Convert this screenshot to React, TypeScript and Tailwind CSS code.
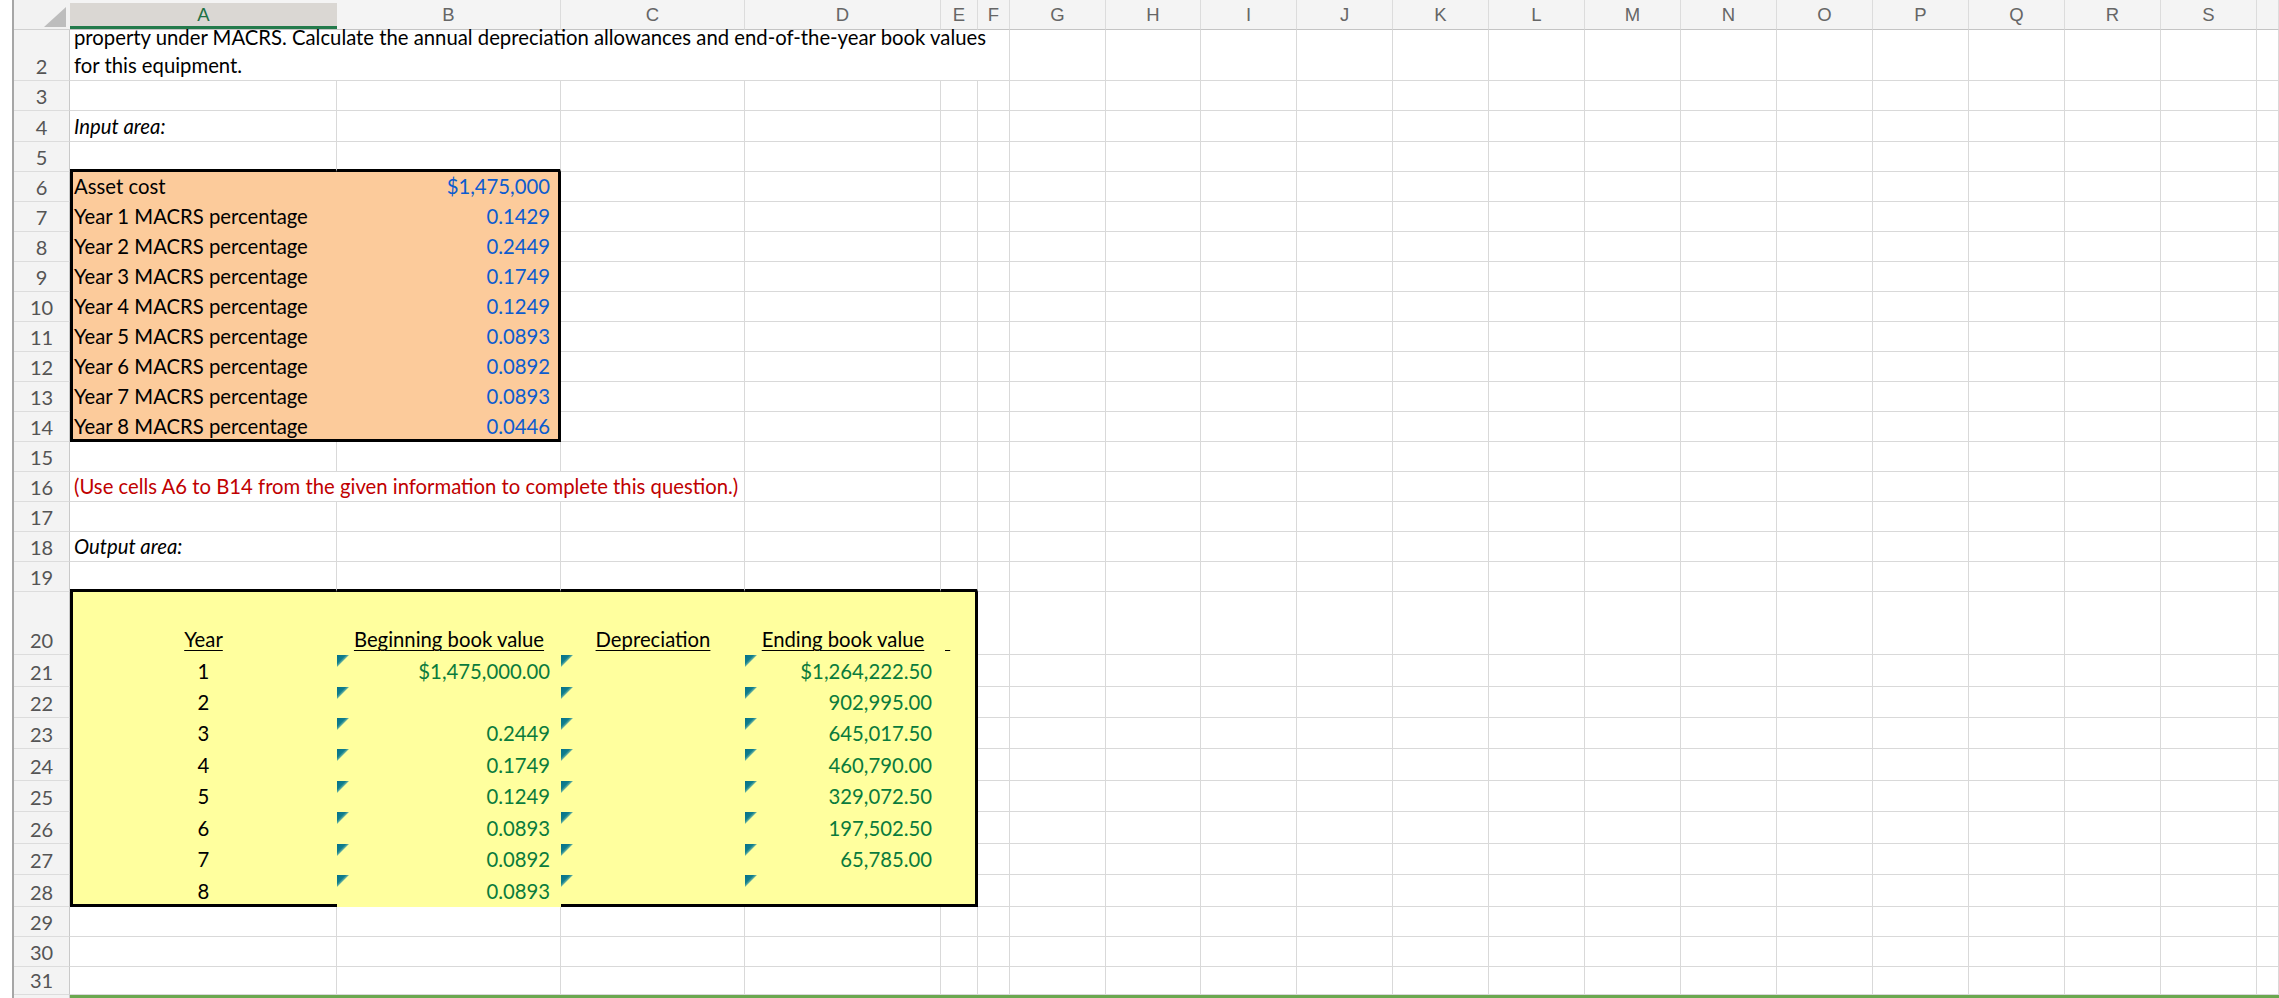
import React from "react";

const COLS =
  "grid grid-cols-[56px_267px_224px_184px_196px_37px_32px_96px_95px_repeat(11,96px)_1fr]";
const LETTERS = ["A", "B", "C", "D", "E", "F", "G", "H", "I", "J", "K", "L", "M", "N", "O", "P", "Q", "R", "S", ""];
const GRID = "border-r border-b border-[#d9d9d9]";
const TXT = "flex items-end whitespace-nowrap px-[4px] leading-[24px]";
const THICK_BOTTOM = "border-r border-r-[#d9d9d9] border-b-[3px] border-b-black";

const INPUT = [
  ["Asset cost", "$1,475,000"],
  ["Year 1 MACRS percentage", "0.1429"],
  ["Year 2 MACRS percentage", "0.2449"],
  ["Year 3 MACRS percentage", "0.1749"],
  ["Year 4 MACRS percentage", "0.1249"],
  ["Year 5 MACRS percentage", "0.0893"],
  ["Year 6 MACRS percentage", "0.0892"],
  ["Year 7 MACRS percentage", "0.0893"],
  ["Year 8 MACRS percentage", "0.0446"],
];

const OUT = [
  { y: 1, beg: "$1,475,000.00", end: "$1,264,222.50", h: "h-[32px]" },
  { y: 2, beg: "", end: "902,995.00", h: "h-[31px]" },
  { y: 3, beg: "0.2449", end: "645,017.50", h: "h-[31px]" },
  { y: 4, beg: "0.1749", end: "460,790.00", h: "h-[32px]" },
  { y: 5, beg: "0.1249", end: "329,072.50", h: "h-[31px]" },
  { y: 6, beg: "0.0893", end: "197,502.50", h: "h-[32px]" },
  { y: 7, beg: "0.0892", end: "65,785.00", h: "h-[31px]" },
  { y: 8, beg: "0.0893", end: "", h: "h-[32px]" },
];

function RowNum({ n }: { n?: number }) {
  return (
    <div className="flex items-end justify-center bg-[#f3f3f3] border-r border-r-[#c9c9c9] border-b border-b-[#dcdcdc] pb-[4px] text-[20px] leading-[20px] text-[#555]">
      {n}
    </div>
  );
}

function blanks(from: number, special?: (i: number) => string | undefined) {
  const out = [];
  for (let i = from; i < 20; i++) out.push(<div key={i} className={special?.(i) ?? GRID} />);
  return out;
}

// excel "number stored as text" style corner flag
function Flag() {
  return (
    <svg className="absolute left-0 top-0" width="12" height="12" viewBox="0 0 12 12">
      <defs>
        <linearGradient id="flag" x1="0" y1="0" x2="1" y2="1">
          <stop offset="0" stopColor="#04708a" />
          <stop offset="0.36" stopColor="#107e8d" />
          <stop offset="0.5" stopColor="#74b8a2" />
        </linearGradient>
      </defs>
      <polygon points="0,0 12,0 0,12" fill="url(#flag)" />
    </svg>
  );
}

function Row({ h, n, children }: { h: string; n?: number; children: React.ReactNode }) {
  return (
    <div className={`${COLS} ${h}`}>
      <RowNum n={n} />
      {children}
    </div>
  );
}

export default function App() {
  return (
    <div className="w-[2279px] h-[998px] overflow-hidden bg-white pl-[12px] [font-family:Lato,'Open_Sans',sans-serif] text-[20.3px] text-black">
      <div className="h-full border-l-2 border-[#a6a6a6]">
        {/* column headers */}
        <div className={`${COLS} h-[30px]`}>
          <div className="relative bg-[#f2f2f2] border-b border-[#d0d0d0]">
            <svg className="absolute left-[30px] top-[7px]" width="22" height="20" viewBox="0 0 22 20">
              <polygon points="22,0 22,20 0,20" fill="#bdbdbd" />
            </svg>
          </div>
          {LETTERS.map((l, i) =>
            i === 0 ? (
              <div key={i} className="bg-[#f4f4f4] pt-[3px] border-b border-[#c4c4c4]">
                <div className="h-full flex items-center justify-center bg-[#dad7d3] border-b-[3px] border-[#237a4b] text-[18.5px] leading-[20px] text-[#1e7145] [font-family:'Liberation_Sans',Arial,sans-serif]">
                  {l}
                </div>
              </div>
            ) : (
              <div
                key={i}
                className="flex items-center justify-center bg-[#f4f4f4] border-r border-r-[#dcdcdc] border-b border-b-[#c4c4c4] text-[18.5px] leading-[20px] text-[#666] [font-family:'Liberation_Sans',Arial,sans-serif]"
              >
                {l}
              </div>
            )
          )}
        </div>

        <Row h="h-[51px]" n={2}>
          <div className="col-span-6 h-[51px] flex flex-col justify-end whitespace-nowrap px-[4px] border-r border-b border-[#d9d9d9]">
            <div className="leading-[27px]">property under MACRS. Calculate the annual depreciation allowances and end-of-the-year book values</div>
            <div className="leading-[29px]">for this equipment.</div>
          </div>
          {blanks(6)}
        </Row>
        <Row h="h-[30px]" n={3}>{blanks(0)}</Row>
        <Row h="h-[31px]" n={4}>
          <div className={`${TXT} ${GRID} pb-[3px] italic`}>Input area:</div>
          {blanks(1)}
        </Row>
        <Row h="h-[30px]" n={5}>{blanks(0, (i) => (i < 2 ? THICK_BOTTOM : undefined))}</Row>

        {/* input area */}
        {INPUT.map(([label, val], i) => {
          const last = i === INPUT.length - 1;
          return (
            <Row key={label} h="h-[30px]" n={6 + i}>
              <div className={`${TXT} bg-[#fccb9b] border-l-[3px] border-black pl-[1px] ${last ? "border-b-[3px] pb-[1px]" : "pb-[4px]"}`}>
                {label}
              </div>
              <div
                className={`${TXT} justify-end bg-[#fccb9b] border-r-[3px] border-black pr-[8px] text-[#0c5ccf] ${last ? "border-b-[3px] pb-[1px]" : "pb-[4px]"}`}
              >
                {val}
              </div>
              {blanks(2)}
            </Row>
          );
        })}

        <Row h="h-[30px]" n={15}>{blanks(0)}</Row>
        <Row h="h-[30px]" n={16}>
          <div className={`col-span-3 ${TXT} ${GRID} pb-[3px] text-[#c00000]`}>
            (Use cells A6 to B14 from the given information to complete this question.)
          </div>
          {blanks(3)}
        </Row>
        <Row h="h-[30px]" n={17}>{blanks(0)}</Row>
        <Row h="h-[30px]" n={18}>
          <div className={`${TXT} ${GRID} pb-[3px] italic`}>Output area:</div>
          {blanks(1)}
        </Row>
        <Row h="h-[30px]" n={19}>{blanks(0, (i) => (i < 5 ? THICK_BOTTOM : undefined))}</Row>

        {/* output area */}
        <Row h="h-[63px]" n={20}>
          <div className={`${TXT} justify-center pb-[4px] pr-[7px] bg-[#ffff9e] border-l-[3px] border-black`}>
            <span className="underline decoration-1 underline-offset-[3px]">Year</span>
          </div>
          <div className={`${TXT} justify-center pb-[4px] bg-[#ffff9e]`}>
            <span className="underline decoration-1 underline-offset-[3px]">Beginning book value</span>
          </div>
          <div className={`${TXT} justify-center pb-[4px] bg-[#ffff9e]`}>
            <span className="underline decoration-1 underline-offset-[3px]">Depreciation</span>
          </div>
          <div className={`${TXT} justify-center pb-[4px] bg-[#ffff9e]`}>
            <span className="underline decoration-1 underline-offset-[3px]">Ending book value</span>
          </div>
          <div className={`${TXT} pb-[4px] bg-[#ffff9e] border-r-[3px] border-black`}>
            <span className="underline decoration-1 underline-offset-[3px]">{"\u00a0"}</span>
          </div>
          {blanks(5)}
        </Row>
        {OUT.map((r, i) => {
          const last = i === OUT.length - 1;
          const bb = last ? "border-b-[3px] border-b-black pb-[1px]" : "pb-[4px]";
          return (
            <Row key={r.y} h={r.h} n={21 + i}>
              <div className={`${TXT} justify-center pr-[7px] bg-[#ffff9e] border-l-[3px] border-l-black ${bb}`}>{r.y}</div>
              <div className={`relative ${TXT} justify-end pr-[11px] pb-[4px] bg-[#ffff9e] text-[#0a7b3c]`}>
                <Flag />
                {r.beg}
              </div>
              <div className={`relative ${TXT} bg-[#ffff9e] ${bb}`}>
                <Flag />
              </div>
              <div className={`relative ${TXT} justify-end pr-[9px] bg-[#ffff9e] text-[#0a7b3c] ${bb}`}>
                <Flag />
                {r.end}
              </div>
              <div className={`${TXT} bg-[#ffff9e] border-r-[3px] border-r-black ${bb}`} />
              {blanks(5)}
            </Row>
          );
        })}

        <Row h="h-[30px]" n={29}>{blanks(0)}</Row>
        <Row h="h-[30px]" n={30}>{blanks(0)}</Row>
        <Row h="h-[28px]" n={31}>{blanks(0)}</Row>
        <div className={`${COLS} h-[3px]`}>
          <div className="bg-[#f3f3f3] border-r border-[#c9c9c9]" />
          <div className="col-[2/-1] bg-[#6aa84f]" />
        </div>
      </div>
    </div>
  );
}
